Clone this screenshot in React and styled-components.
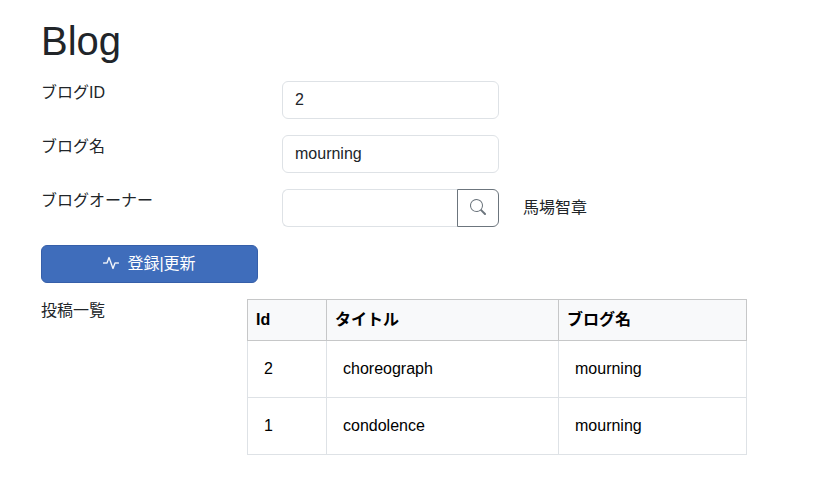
import React from "react";
import styled, { createGlobalStyle } from "styled-components";
import { BsActivity, BsSearch } from "react-icons/bs";

const GlobalStyle = createGlobalStyle`
  *, *::before, *::after { box-sizing: border-box; }
  body {
    margin: 0;
    background: #fff;
    color: #212529;
    font: 400 16px/24px "Liberation Sans", "Noto Sans CJK JP", sans-serif;
  }
`;

const Page = styled.main`
  padding: 17px 41px 0;
`;

const Title = styled.h1`
  margin: 0 0 16px;
  font-size: 40px;
  font-weight: 400;
  line-height: 48px;
`;

const Field = styled.div`
  display: grid;
  grid-template-columns: 217px 217px auto;
  column-gap: 24px;
  height: 38px;
  margin-bottom: 16px;
`;

const Label = styled.label`
  line-height: 24px;
`;

const Input = styled.input`
  width: 100%;
  min-width: 0;
  height: 38px;
  padding: 6px 12px;
  border: 1px solid #dee2e6;
  border-radius: ${(p) => (p.$joined ? "6px 0 0 6px" : "6px")};
  border-right-width: ${(p) => (p.$joined ? "0" : "1px")};
  background: #fff;
  color: #212529;
  font: inherit;
  outline: none;
`;

const InputGroup = styled.div`
  display: flex;
`;

const SearchButton = styled.button`
  display: flex;
  flex: 0 0 42px;
  align-items: center;
  justify-content: center;
  height: 38px;
  padding: 0 0 2px;
  border: 1px solid #6c757d;
  border-radius: 0 6px 6px 0;
  background: #fff;
  color: #6c757d;
`;

const OwnerName = styled.span`
  line-height: 38px;
`;

const SubmitButton = styled.button`
  display: flex;
  align-items: center;
  justify-content: center;
  gap: 8px;
  width: 217px;
  height: 38px;
  margin: 18px 0 16px;
  padding: 0;
  border: 1px solid #365fa9;
  border-radius: 6px;
  background: #3f6dbb;
  color: #fff;
  font: inherit;
`;

const ActivityIcon = styled(BsActivity)`
  margin-bottom: 2px;
  stroke: currentColor;
  stroke-width: 0.3px;
`;

const Posts = styled.section`
  display: grid;
  grid-template-columns: 206px 500px;
  align-items: start;
`;

const Table = styled.table`
  width: 500px;
  border-collapse: collapse;
  table-layout: fixed;
  color: #000;
`;

const Column = styled.col`
  width: ${(p) => p.$width}px;
`;

const HeaderCell = styled.th`
  height: 41px;
  padding: 0 8px;
  border: 1px solid #c6c7c8;
  background: #f8f9fa;
  font-weight: 700;
  line-height: 24px;
  text-align: left;
`;

const Cell = styled.td`
  height: 57px;
  padding: 0 16px;
  border: 1px solid #dee2e6;
`;

const posts = [
  { id: 2, title: "choreograph", blog: "mourning" },
  { id: 1, title: "condolence", blog: "mourning" },
];

export default function App() {
  return (
    <>
      <GlobalStyle />
      <Page>
        <Title>Blog</Title>
        <Field>
          <Label htmlFor="blog-id">ブログID</Label>
          <Input id="blog-id" defaultValue="2" />
        </Field>
        <Field>
          <Label htmlFor="blog-name">ブログ名</Label>
          <Input id="blog-name" defaultValue="mourning" />
        </Field>
        <Field>
          <Label htmlFor="blog-owner">ブログオーナー</Label>
          <InputGroup>
            <Input id="blog-owner" $joined />
            <SearchButton type="button" aria-label="検索">
              <BsSearch size={16} />
            </SearchButton>
          </InputGroup>
          <OwnerName>馬場智章</OwnerName>
        </Field>
        <SubmitButton type="button">
          <ActivityIcon size={16} />
          <span>登録|更新</span>
        </SubmitButton>
        <Posts>
          <Label as="span">投稿一覧</Label>
          <Table>
            <colgroup>
              <Column $width={79} />
              <Column $width={232} />
              <Column $width={188} />
            </colgroup>
            <thead>
              <tr>
                <HeaderCell>Id</HeaderCell>
                <HeaderCell>タイトル</HeaderCell>
                <HeaderCell>ブログ名</HeaderCell>
              </tr>
            </thead>
            <tbody>
              {posts.map((post) => (
                <tr key={post.id}>
                  <Cell>{post.id}</Cell>
                  <Cell>{post.title}</Cell>
                  <Cell>{post.blog}</Cell>
                </tr>
              ))}
            </tbody>
          </Table>
        </Posts>
      </Page>
    </>
  );
}
